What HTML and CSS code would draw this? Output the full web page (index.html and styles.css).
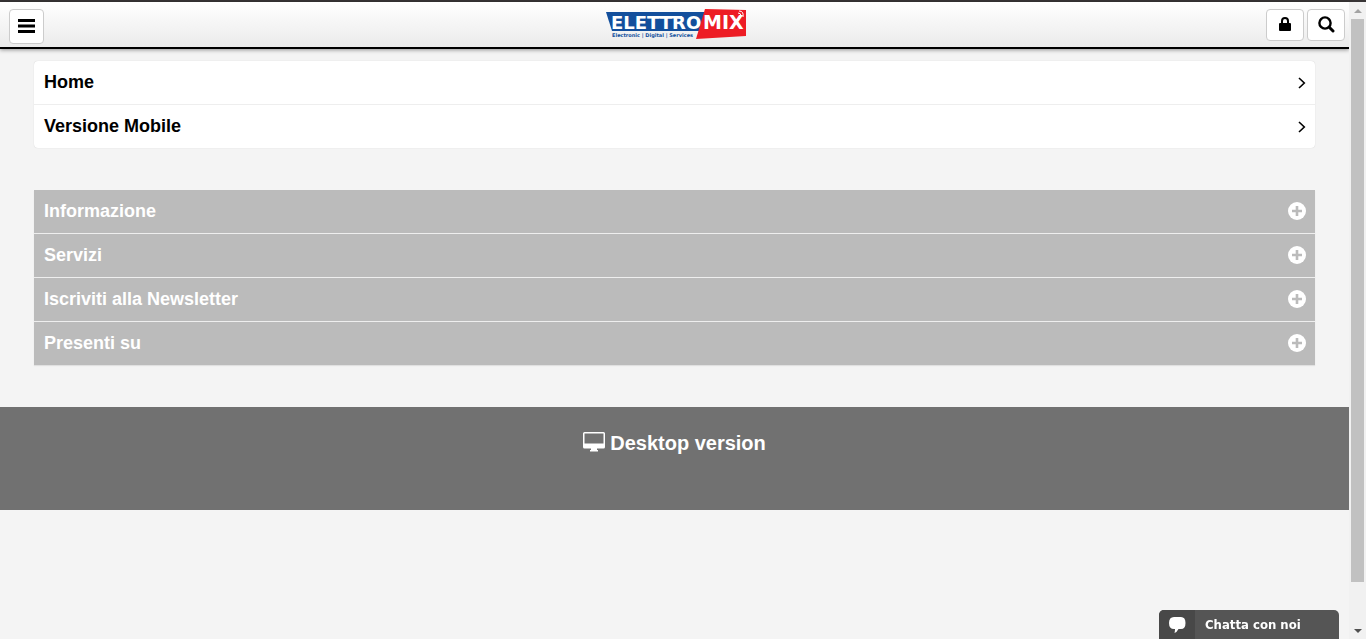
FILE: index.html
```html
<!DOCTYPE html>
<html lang="it">
<head>
    <meta charset="UTF-8">
    <meta name="viewport" content="width=device-width, initial-scale=1.0">
    <title>Eletromix</title>
    <link rel="stylesheet" href="styles.css">
</head>
<body>
    <div class="window">
        <div class="page">
            <header class="header">
                <button class="btn btn-menu" type="button" aria-label="Menu">
                    <svg width="17" height="16" viewBox="0 0 17 16"><path d="M0 0h17v3H0zM0 5.500h17v3H0zM0 11h17v3H0z"/></svg>
                </button>
                <a class="logo" href="#" aria-label="Eletromix">
                    <svg width="142" height="32" viewBox="2 1 142 32">
                        <path fill="#134f9c" d="M2 4H101L95 23H8Z"/>
                        <path fill="#ed1c24" d="M101 1L142 2V28L92 31Z"/>
                        <text class="logo-name" x="7" y="21">ELETTRO</text>
                        <path fill="#fff" d="M48 8H78V10.500H48Z"/>
                        <text class="logo-name logo-mix" x="99" y="21">MIX</text>
                        <path fill="none" stroke="#fff" d="M135 3Q140 3 139 9M134 5Q137 5 137 8"/>
                        <text class="logo-tag" x="8" y="29">Electronic | Digital | Services</text>
                    </svg>
                </a>
                <div class="tools">
                    <button class="btn" type="button" aria-label="Login">
                        <svg width="12" height="15" viewBox="0 0 12 15"><path d="M1 6H11Q12 6 12 7V13Q12 14 11 14H1Q0 14 0 13V7Q0 6 1 6Z"/><path fill="none" stroke="#000" stroke-width="2" d="M3 7V4a3 3 0 0 1 6 0V7"/></svg>
                    </button>
                    <button class="btn" type="button" aria-label="Cerca">
                        <svg width="17" height="17" viewBox="0 0 17 17"><g fill="none" stroke="#000"><circle cx="7" cy="7" r="5.6" stroke-width="2.4"/><path stroke-width="3" stroke-linecap="round" d="M11.5 11.5L15 15"/></g></svg>
                    </button>
                </div>
            </header>

            <main class="content">
                <nav class="links">
                    <a class="row" href="#">Home
                        <svg width="8" height="12" viewBox="0 0 8 12"><path fill="none" stroke="#000" stroke-width="1.6" d="M1 1L6.3 6L1 11"/></svg>
                    </a>
                    <a class="row" href="#">Versione Mobile
                        <svg width="8" height="12" viewBox="0 0 8 12"><path fill="none" stroke="#000" stroke-width="1.6" d="M1 1L6.3 6L1 11"/></svg>
                    </a>
                </nav>

                <div class="sections">
                    <button class="row" type="button">Informazione
                        <svg width="18" height="19" viewBox="0 0 18 19"><circle cx="9" cy="9" r="9"/><path stroke="#bbb" stroke-width="2.6" d="M9 4v10M4 9h10"/></svg>
                    </button>
                    <button class="row" type="button">Servizi
                        <svg width="18" height="19" viewBox="0 0 18 19"><circle cx="9" cy="9" r="9"/><path stroke="#bbb" stroke-width="2.6" d="M9 4v10M4 9h10"/></svg>
                    </button>
                    <button class="row" type="button">Iscriviti alla Newsletter
                        <svg width="18" height="19" viewBox="0 0 18 19"><circle cx="9" cy="9" r="9"/><path stroke="#bbb" stroke-width="2.6" d="M9 4v10M4 9h10"/></svg>
                    </button>
                    <button class="row" type="button">Presenti su
                        <svg width="18" height="19" viewBox="0 0 18 19"><circle cx="9" cy="9" r="9"/><path stroke="#bbb" stroke-width="2.6" d="M9 4v10M4 9h10"/></svg>
                    </button>
                </div>
            </main>

            <footer class="footer">
                <a class="desktop-link" href="#">
                    <svg width="22" height="22" viewBox="0 0 22 22"><path fill="#fff" fill-rule="evenodd" d="M1.500 0H20.500Q22 0 22 1.500V15Q22 16.500 20.500 16.500H14V18H15V19.500H7V18H8V16.500H1.500Q0 16.500 0 15V1.500Q0 0 1.500 0ZM1.500 1.500V11.500H20.500V1.500Z"/></svg>
                    Desktop version
                </a>
            </footer>
        </div>

        <div class="scrollbar" aria-hidden="true">
            <span class="arrow"><svg width="8" height="4" viewBox="0 0 8 4"><path fill="#a3a3a3" d="M0 4L4 0L8 4Z"/></svg></span>
            <span class="thumb"></span>
            <span class="track"></span>
            <span class="arrow"><svg width="8" height="4" viewBox="0 0 8 4"><path fill="#505050" d="M0 0L4 4L8 0Z"/></svg></span>
        </div>
    </div>

    <button class="chat" type="button">
        <span class="chat-icon">
            <svg width="17" height="16" viewBox="0 0 17 16"><path fill="#fff" d="M5 0H12Q16.500 0 16.500 6Q16.500 12 12 12H9.500Q8 15 5.500 16Q6 14 6 12H5Q0 12 0 6Q0 0 5 0Z"/></svg>
        </span>
        <span class="chat-label">Chatta con noi</span>
    </button>
</body>
</html>
```

FILE: styles.css
```css
* {
    box-sizing: border-box;
}

body {
    margin: 0;
    background: #f4f4f4;
    font-family: "Liberation Sans", Arial, sans-serif;
    font-size: 18px;
    font-weight: bold;
    color: #000;
}

button {
    font: inherit;
    cursor: pointer;
}

a {
    color: inherit;
    text-decoration: none;
}

svg {
    display: block;
    flex: none;
}

.window {
    display: flex;
    min-height: 100vh;
    border-top: 2px solid #383536;
}

.page {
    flex: 1;
    min-width: 0;
}

/* header */
.header {
    display: grid;
    grid-template-columns: 1fr auto 1fr;
    align-items: start;
    padding: 7px 4px 3px 9px;
    border-bottom: 2px solid #000;
    background: linear-gradient(#fff, #ebebeb);
    box-shadow: 0 1px 4px rgba(0, 0, 0, 0.4);
}

.btn {
    display: flex;
    align-items: center;
    justify-content: center;
    width: 38px;
    height: 32px;
    padding: 0 0 2px;
    border: 1px solid #ccc;
    border-radius: 4px;
    background: #fff;
}

.btn-menu {
    width: 35px;
    height: 35px;
    padding: 0;
}

.tools {
    display: flex;
    justify-content: flex-end;
    gap: 3px;
}

.logo-name {
    font-family: "DejaVu Sans", Verdana, sans-serif;
    font-size: 18px;
    fill: #fff;
}

.logo-mix {
    font-size: 19px;
}

.logo-tag {
    font-family: "DejaVu Sans", Verdana, sans-serif;
    font-size: 5px;
    fill: #134f9c;
}

/* lists */
.content {
    padding: 12px 34px 42px;
}

.row {
    display: flex;
    align-items: center;
    justify-content: space-between;
    width: 100%;
    height: 44px;
    padding: 0 9px 0 10px;
    border: 0;
    border-bottom: 1px solid #eee;
    text-align: left;
}

.row:last-child {
    height: 43px;
    border-bottom: 0;
}

.links {
    margin-bottom: 42px;
    border-radius: 4px;
    background: #fff;
    box-shadow: 0 0 1px rgba(0, 0, 0, 0.2);
}

.sections {
    box-shadow: 0 1px 1px rgba(0, 0, 0, 0.08);
}

.sections .row {
    background: #bbb;
    color: #fff;
    fill: #fff;
}

/* footer */
.footer {
    display: flex;
    justify-content: center;
    padding: 24px 0 55px;
    background: #717171;
}

.desktop-link {
    display: flex;
    align-items: center;
    gap: 5px;
    font-size: 20px;
    line-height: 24px;
    color: #fff;
}

/* scrollbar */
.scrollbar {
    display: flex;
    flex-direction: column;
    width: 17px;
    padding: 0 2px;
    background: #f1f1f1;
}

.arrow {
    display: flex;
    align-items: center;
    justify-content: center;
    height: 17px;
}

.thumb {
    flex: 14;
    background: #c1c1c1;
}

.track {
    flex: 1;
}

/* chat */
.chat {
    position: fixed;
    right: 27px;
    bottom: 0;
    display: flex;
    width: 180px;
    height: 29px;
    padding: 0;
    border: 0;
    border-radius: 5px 5px 0 0;
    overflow: hidden;
    background: #555;
    color: #fff;
}

.chat-icon {
    display: flex;
    align-items: center;
    justify-content: center;
    width: 36px;
    height: 100%;
    background: #484848;
}

.chat-label {
    padding-left: 10px;
    font-family: "DejaVu Sans Condensed", Tahoma, sans-serif;
    font-size: 13px;
    line-height: 29px;
}
```
